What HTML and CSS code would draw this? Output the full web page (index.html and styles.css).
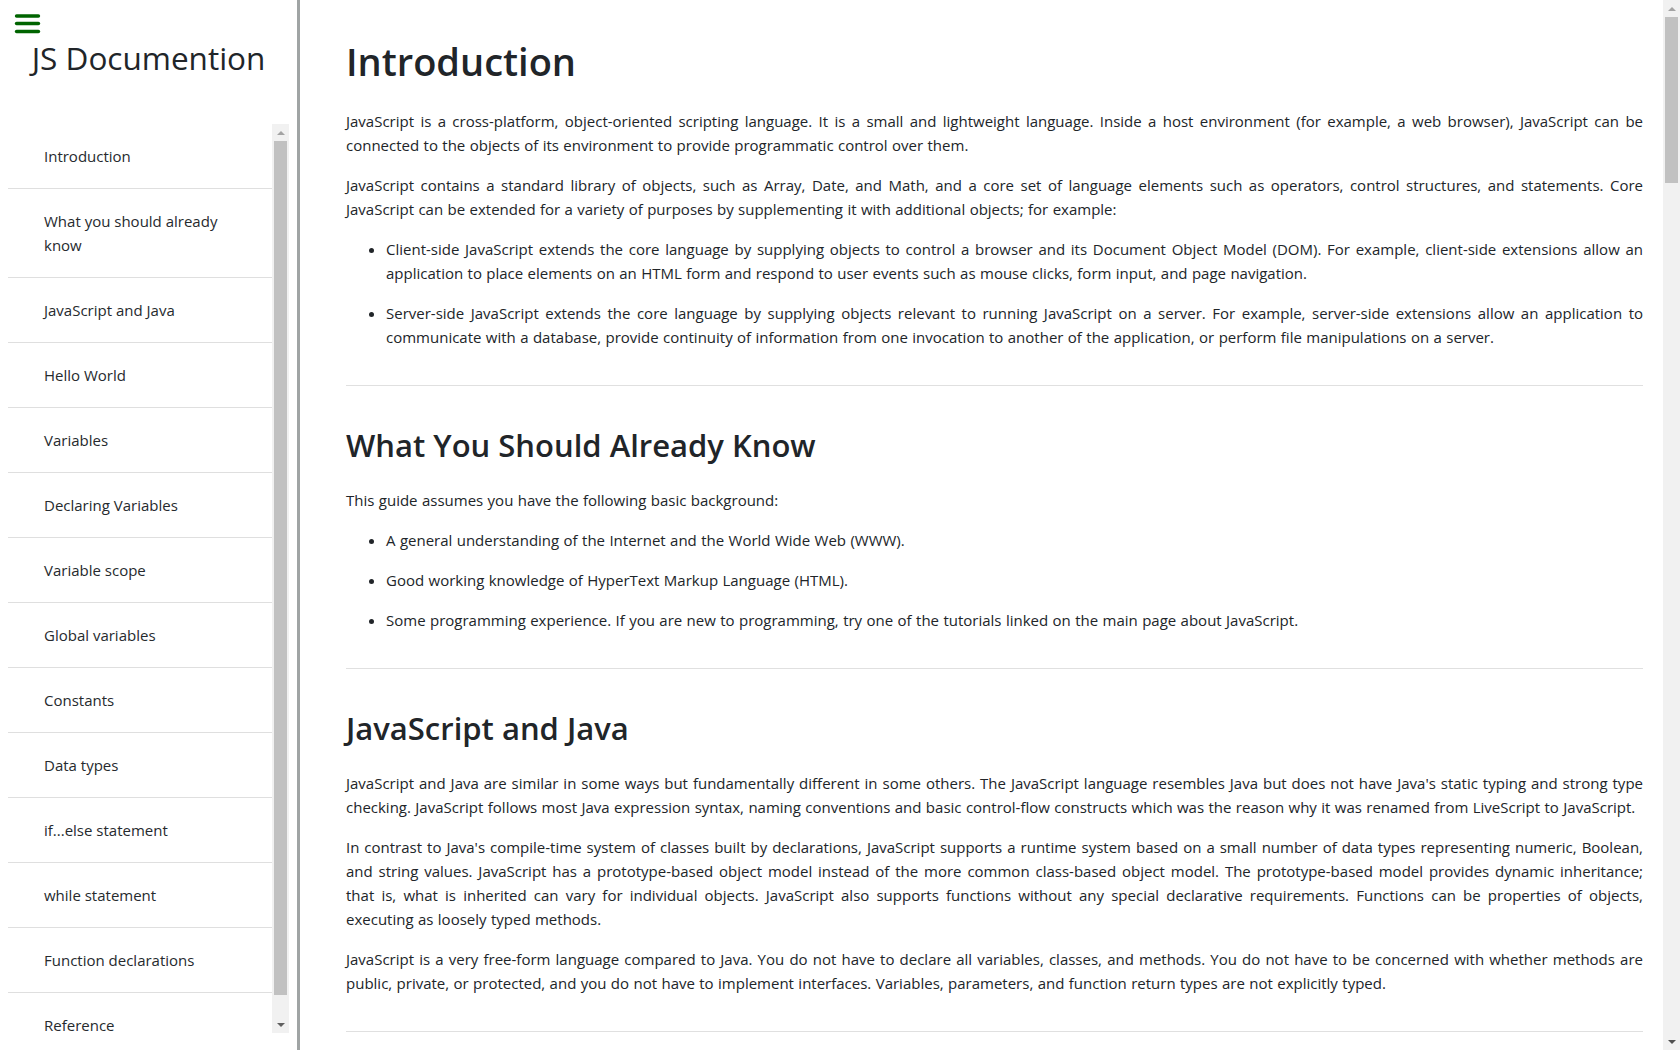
FILE: index.html
```html
<!DOCTYPE html>
<html lang="en">
<head>
<meta charset="utf-8">
<title>JS Documentation</title>
<link rel="stylesheet" href="styles.css">
</head>
<body>
<nav id="navbar" class="sidebar">
  <div class="sidebar-head">
    <button class="menu-btn" type="button" aria-label="Menu">
      <svg width="38" height="28" viewBox="0 0 38 28"><g stroke="#006400" stroke-width="3.6" stroke-linecap="round"><line x1="8.6" y1="8" x2="30.4" y2="8"/><line x1="8.6" y1="15.5" x2="30.4" y2="15.5"/><line x1="8.6" y1="23.5" x2="30.4" y2="23.5"/></g></svg>
    </button>
    <header class="brand">JS Documention</header>
  </div>
  <div class="nav-box">
    <ul class="nav-list">
      <li><a class="nav-link" href="#Introduction">Introduction</a></li>
      <li><a class="nav-link" href="#What_you_should_already_know">What you should already know</a></li>
      <li><a class="nav-link" href="#JavaScript_and_Java">JavaScript and Java</a></li>
      <li><a class="nav-link" href="#Hello_World">Hello World</a></li>
      <li><a class="nav-link" href="#Variables">Variables</a></li>
      <li><a class="nav-link" href="#Declaring_Variables">Declaring Variables</a></li>
      <li><a class="nav-link" href="#Variable_scope">Variable scope</a></li>
      <li><a class="nav-link" href="#Global_variables">Global variables</a></li>
      <li><a class="nav-link" href="#Constants">Constants</a></li>
      <li><a class="nav-link" href="#Data_types">Data types</a></li>
      <li><a class="nav-link" href="#if...else_statement">if...else statement</a></li>
      <li><a class="nav-link" href="#while_statement">while statement</a></li>
      <li><a class="nav-link" href="#Function_declarations">Function declarations</a></li>
      <li><a class="nav-link" href="#Reference">Reference</a></li>
    </ul>
    <div class="scrollbar nav-scrollbar" aria-hidden="true">
      <span class="sb-btn sb-up"></span>
      <span class="sb-track"><span class="sb-thumb nav-thumb"></span></span>
      <span class="sb-btn sb-down"></span>
    </div>
  </div>
</nav>
<main id="main-doc" class="main">
  <section class="main-section" id="Introduction">
    <header class="sec-title t1">Introduction</header>
    <p>JavaScript is a cross-platform, object-oriented scripting language. It is a small and lightweight language. Inside a host environment (for example, a web browser), JavaScript can be connected to the objects of its environment to provide programmatic control over them.</p>
    <p>JavaScript contains a standard library of objects, such as Array, Date, and Math, and a core set of language elements such as operators, control structures, and statements. Core JavaScript can be extended for a variety of purposes by supplementing it with additional objects; for example:</p>
    <ul>
      <li>Client-side JavaScript extends the core language by supplying objects to control a browser and its Document Object Model (DOM). For example, client-side extensions allow an application to place elements on an HTML form and respond to user events such as mouse clicks, form input, and page navigation.</li>
      <li>Server-side JavaScript extends the core language by supplying objects relevant to running JavaScript on a server. For example, server-side extensions allow an application to communicate with a database, provide continuity of information from one invocation to another of the application, or perform file manipulations on a server.</li>
    </ul>
  </section>
  <section class="main-section" id="What_you_should_already_know">
    <header class="sec-title t2">What You Should Already Know</header>
    <p>This guide assumes you have the following basic background:</p>
    <ul>
      <li>A general understanding of the Internet and the World Wide Web (WWW).</li>
      <li>Good working knowledge of HyperText Markup Language (HTML).</li>
      <li>Some programming experience. If you are new to programming, try one of the tutorials linked on the main page about JavaScript.</li>
    </ul>
  </section>
  <section class="main-section" id="JavaScript_and_Java">
    <header class="sec-title t2">JavaScript and Java</header>
    <p>JavaScript and Java are similar in some ways but fundamentally different in some others. The JavaScript language resembles Java but does not have Java's static typing and strong type checking. JavaScript follows most Java expression syntax, naming conventions and basic control-flow constructs which was the reason why it was renamed from LiveScript to JavaScript.</p>
    <p>In contrast to Java's compile-time system of classes built by declarations, JavaScript supports a runtime system based on a small number of data types representing numeric, Boolean, and string values. JavaScript has a prototype-based object model instead of the more common class-based object model. The prototype-based model provides dynamic inheritance; that is, what is inherited can vary for individual objects. JavaScript also supports functions without any special declarative requirements. Functions can be properties of objects, executing as loosely typed methods.</p>
    <p>JavaScript is a very free-form language compared to Java. You do not have to declare all variables, classes, and methods. You do not have to be concerned with whether methods are public, private, or protected, and you do not have to implement interfaces. Variables, parameters, and function return types are not explicitly typed.</p>
  </section>
</main>
<div class="scrollbar page-scrollbar" aria-hidden="true">
  <span class="sb-btn sb-up"></span>
  <span class="sb-track"><span class="sb-thumb page-thumb"></span></span>
  <span class="sb-btn sb-down"></span>
</div>
</body>
</html>
```
FILE: styles.css
```css
* {
  box-sizing: border-box;
}

html,
body {
  margin: 0;
  height: 100%;
}

body {
  display: flex;
  overflow: hidden;
  font-family: "Open Sans", "Noto Sans", sans-serif;
  font-size: 15px;
  line-height: 24px;
  color: #212529;
  background: #fff;
}

/* ---------- scrollbars (drawn, classic light style) ---------- */
.scrollbar {
  flex: none;
  width: 17px;
  display: flex;
  flex-direction: column;
  background: #f1f1f1;
}

.sb-btn {
  flex: none;
  height: 17px;
  display: flex;
  align-items: center;
  justify-content: center;
}

.sb-btn::before {
  content: "";
  width: 0;
  height: 0;
  border-left: 4px solid transparent;
  border-right: 4px solid transparent;
}

.sb-up::before {
  border-bottom: 4px solid #a3a3a3;
}

.sb-down::before {
  border-top: 4px solid #505050;
}

.nav-scrollbar .sb-down::before {
  border-top-color: #606060;
}

.sb-track {
  flex: 1;
  min-height: 0;
  display: flex;
  flex-direction: column;
  padding: 0 2px;
}

.sb-thumb {
  display: block;
  background: #c1c1c1;
}

.nav-thumb {
  height: 854px;
}

.page-thumb {
  height: 166px;
}

/* ---------- sidebar ---------- */
.sidebar {
  flex: none;
  width: 300px;
  height: 100vh;
  padding: 8px 8px 17px;
  border-right: 3px solid #a0a4a4;
  display: flex;
  flex-direction: column;
}

.sidebar-head {
  flex: none;
}

.menu-btn {
  display: block;
  width: 38px;
  height: 28px;
  padding: 0;
  border: 0;
  background: transparent;
}

.menu-btn svg {
  display: block;
}

.brand {
  margin: 3px 0 47px;
  font-size: 31.5px;
  line-height: 38px;
  font-weight: 400;
  text-align: center;
  color: #212529;
}

.nav-box {
  flex: 1;
  min-height: 0;
  display: flex;
}

.nav-list {
  flex: 1;
  min-width: 0;
  overflow: hidden;
  list-style: none;
  margin: 0;
  padding: 0;
}

.nav-list li {
  border-bottom: 1px solid #dfdfdf;
}

.nav-link {
  display: block;
  padding: 20px 20px 20px 36px;
  color: #262a2e;
  text-decoration: none;
}

/* ---------- main ---------- */
.main {
  flex: 1;
  min-width: 0;
  height: 100vh;
  overflow: hidden;
  padding: 36px 20px 0 46px;
  word-spacing: 0.5px;
}

.main-section {
  padding-bottom: 20px;
  margin-bottom: 39px;
  border-bottom: 1px solid #e0e0e0;
}

.sec-title {
  display: block;
  font-weight: 600;
  color: #212529;
  word-spacing: 0;
}

.t1 {
  font-size: 38px;
  line-height: 48px;
  padding-top: 1px;
  margin: 0 0 24px;
}

.t2 {
  font-size: 31px;
  line-height: 38.4px;
  padding-top: 1px;
  margin: 0 0 23.6px;
}

.main p {
  margin: 0 0 16px;
  text-align: justify;
}

.main ul {
  margin: 0 0 16px;
  padding-left: 40px;
}

.main li {
  margin-bottom: 16px;
  text-align: justify;
}
```
